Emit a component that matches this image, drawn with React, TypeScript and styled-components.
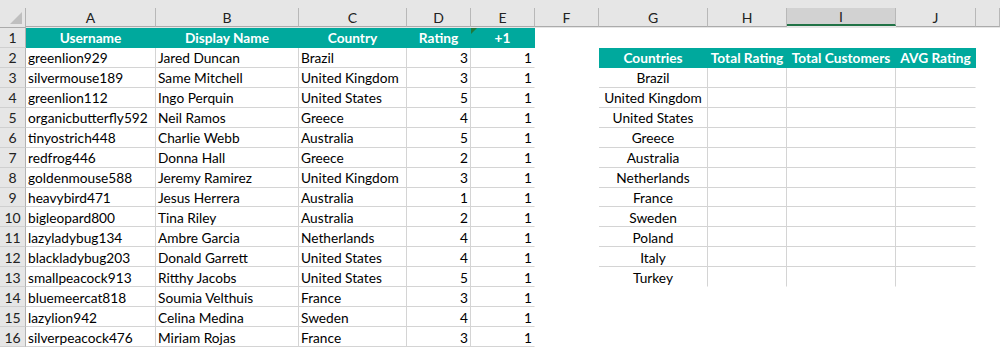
import React from 'react';
import styled, { createGlobalStyle, css } from 'styled-components';

const GlobalStyle = createGlobalStyle`
  html, body { margin: 0; padding: 0; background: #ffffff; }
  body { font-family: Lato, "Open Sans", sans-serif; overflow: hidden; }
`;

const COLS = '26px 130px 143px 108px 64px 64px 64px 109px 79px 109px 80px 1fr';
const TEAL = '#00a99d';
const GRID = '#d4d4d4';

const Sheet = styled.div`
  width: 1000px;
  height: 347px;
  overflow: hidden;
  display: flex;
  flex-direction: column;
  background: #ffffff;
`;

const HeaderBar = styled.div`
  display: grid;
  grid-template-columns: ${COLS};
  background: #e6e6e6;
  padding-top: 8px;
`;

const Corner = styled.div`
  position: relative;
  height: 19px;
  border-right: 1px solid #b3b3b3;
  border-bottom: 1px solid #ababab;
  svg { position: absolute; right: 3px; bottom: 3px; }
`;

const ColHead = styled.div<{ $selected?: boolean }>`
  height: 19px;
  display: flex;
  align-items: center;
  justify-content: center;
  font-size: 14px;
  padding-top: 1px;
  box-sizing: border-box;
  color: #222;
  border-right: 1px solid #b8b8b8;
  border-bottom: 1px solid #ababab;
  ${(p) =>
    p.$selected &&
    css`
      background: #d2d2d2;
      height: 18px;
      border-bottom: 2px solid #217346;
    `}
`;

const Row = styled.div`
  display: grid;
  grid-template-columns: ${COLS};
  height: 20px;
`;

const RowHead = styled.div`
  background: #e6e6e6;
  border-right: 1px solid #b3b3b3;
  border-bottom: 1px solid #d0d0d0;
  display: flex;
  align-items: center;
  justify-content: center;
  padding-top: 1px;
  box-sizing: border-box;
  font-size: 14px;
  color: #222;
`;

type Align = 'left' | 'right' | 'center';

const Cell = styled.div<{
  $align?: Align;
  $head?: boolean;
  $right?: boolean;
  $bottom?: boolean;
}>`
  position: relative;
  box-sizing: border-box;
  display: flex;
  align-items: center;
  justify-content: ${(p) =>
    p.$align === 'right' ? 'flex-end' : p.$align === 'center' ? 'center' : 'flex-start'};
  padding: 1px 2px 0 2px;
  font-size: 13.7px;
  color: #000;
  white-space: nowrap;
  overflow: visible;
  border-right: 1px solid ${(p) => (p.$right ? GRID : 'transparent')};
  border-bottom: 1px solid ${(p) => (p.$bottom ? GRID : 'transparent')};
  ${(p) =>
    p.$head &&
    css`
      background: ${TEAL};
      color: #ffffff;
      font-weight: 700;
      border-color: ${TEAL};
    `}
`;

const ErrorMark = styled.span`
  position: absolute;
  left: 0;
  top: 0;
  width: 0;
  height: 0;
  border-top: 6px solid #1f7a3c;
  border-right: 6px solid transparent;
`;

const letters = ['A', 'B', 'C', 'D', 'E', 'F', 'G', 'H', 'I', 'J', ''];

const people: [string, string, string, number, number][] = [
  ['greenlion929', 'Jared Duncan', 'Brazil', 3, 1],
  ['silvermouse189', 'Same Mitchell', 'United Kingdom', 3, 1],
  ['greenlion112', 'Ingo Perquin', 'United States', 5, 1],
  ['organicbutterfly592', 'Neil Ramos', 'Greece', 4, 1],
  ['tinyostrich448', 'Charlie Webb', 'Australia', 5, 1],
  ['redfrog446', 'Donna Hall', 'Greece', 2, 1],
  ['goldenmouse588', 'Jeremy Ramirez', 'United Kingdom', 3, 1],
  ['heavybird471', 'Jesus Herrera', 'Australia', 1, 1],
  ['bigleopard800', 'Tina Riley', 'Australia', 2, 1],
  ['lazyladybug134', 'Ambre Garcia', 'Netherlands', 4, 1],
  ['blackladybug203', 'Donald Garrett', 'United States', 4, 1],
  ['smallpeacock913', 'Ritthy Jacobs', 'United States', 5, 1],
  ['bluemeercat818', 'Soumia Velthuis', 'France', 3, 1],
  ['lazylion942', 'Celina Medina', 'Sweden', 4, 1],
  ['silverpeacock476', 'Miriam Rojas', 'France', 3, 1],
];

const countries = [
  'Brazil',
  'United Kingdom',
  'United States',
  'Greece',
  'Australia',
  'Netherlands',
  'France',
  'Sweden',
  'Poland',
  'Italy',
  'Turkey',
];

const summaryHead = ['Countries', 'Total Rating', 'Total Customers', 'AVG Rating'];

function RightPart({ rowIndex }: { rowIndex: number }) {
  if (rowIndex === 2) {
    return (
      <>
        <Cell />
        {summaryHead.map((h) => (
          <Cell key={h} $head $align="center">
            {h}
          </Cell>
        ))}
        <Cell />
      </>
    );
  }
  const ci = rowIndex - 3;
  if (ci >= 0 && ci < countries.length) {
    const last = ci === countries.length - 1;
    return (
      <>
        <Cell />
        <Cell $align="center" $right $bottom={!last}>
          {countries[ci]}
        </Cell>
        <Cell $right $bottom={!last} />
        <Cell $right $bottom={!last} />
        <Cell $bottom={!last} />
        <Cell />
      </>
    );
  }
  return (
    <>
      <Cell />
      <Cell />
      <Cell />
      <Cell />
      <Cell />
      <Cell />
    </>
  );
}

export default function App() {
  return (
    <>
      <GlobalStyle />
      <Sheet>
        <HeaderBar>
          <Corner>
            <svg width="12" height="12" viewBox="0 0 12 12">
              <polygon points="12,0 12,12 0,12" fill="#bfbfbf" />
            </svg>
          </Corner>
          {letters.map((l, i) => (
            <ColHead key={i} $selected={l === 'I'}>
              {l}
            </ColHead>
          ))}
        </HeaderBar>

        <Row>
          <RowHead>1</RowHead>
          <Cell $head $align="center">Username</Cell>
          <Cell $head $align="center">Display Name</Cell>
          <Cell $head $align="center">Country</Cell>
          <Cell $head $align="center">Rating</Cell>
          <Cell $head $align="center">
            <ErrorMark />
            +1
          </Cell>
          <RightPart rowIndex={1} />
        </Row>

        {people.map((p, i) => (
          <Row key={p[0]}>
            <RowHead>{i + 2}</RowHead>
            <Cell $right $bottom>{p[0]}</Cell>
            <Cell $right $bottom>{p[1]}</Cell>
            <Cell $right $bottom>{p[2]}</Cell>
            <Cell $right $bottom $align="right">{p[3]}</Cell>
            <Cell $bottom $align="right">{p[4]}</Cell>
            <RightPart rowIndex={i + 2} />
          </Row>
        ))}
      </Sheet>
    </>
  );
}
